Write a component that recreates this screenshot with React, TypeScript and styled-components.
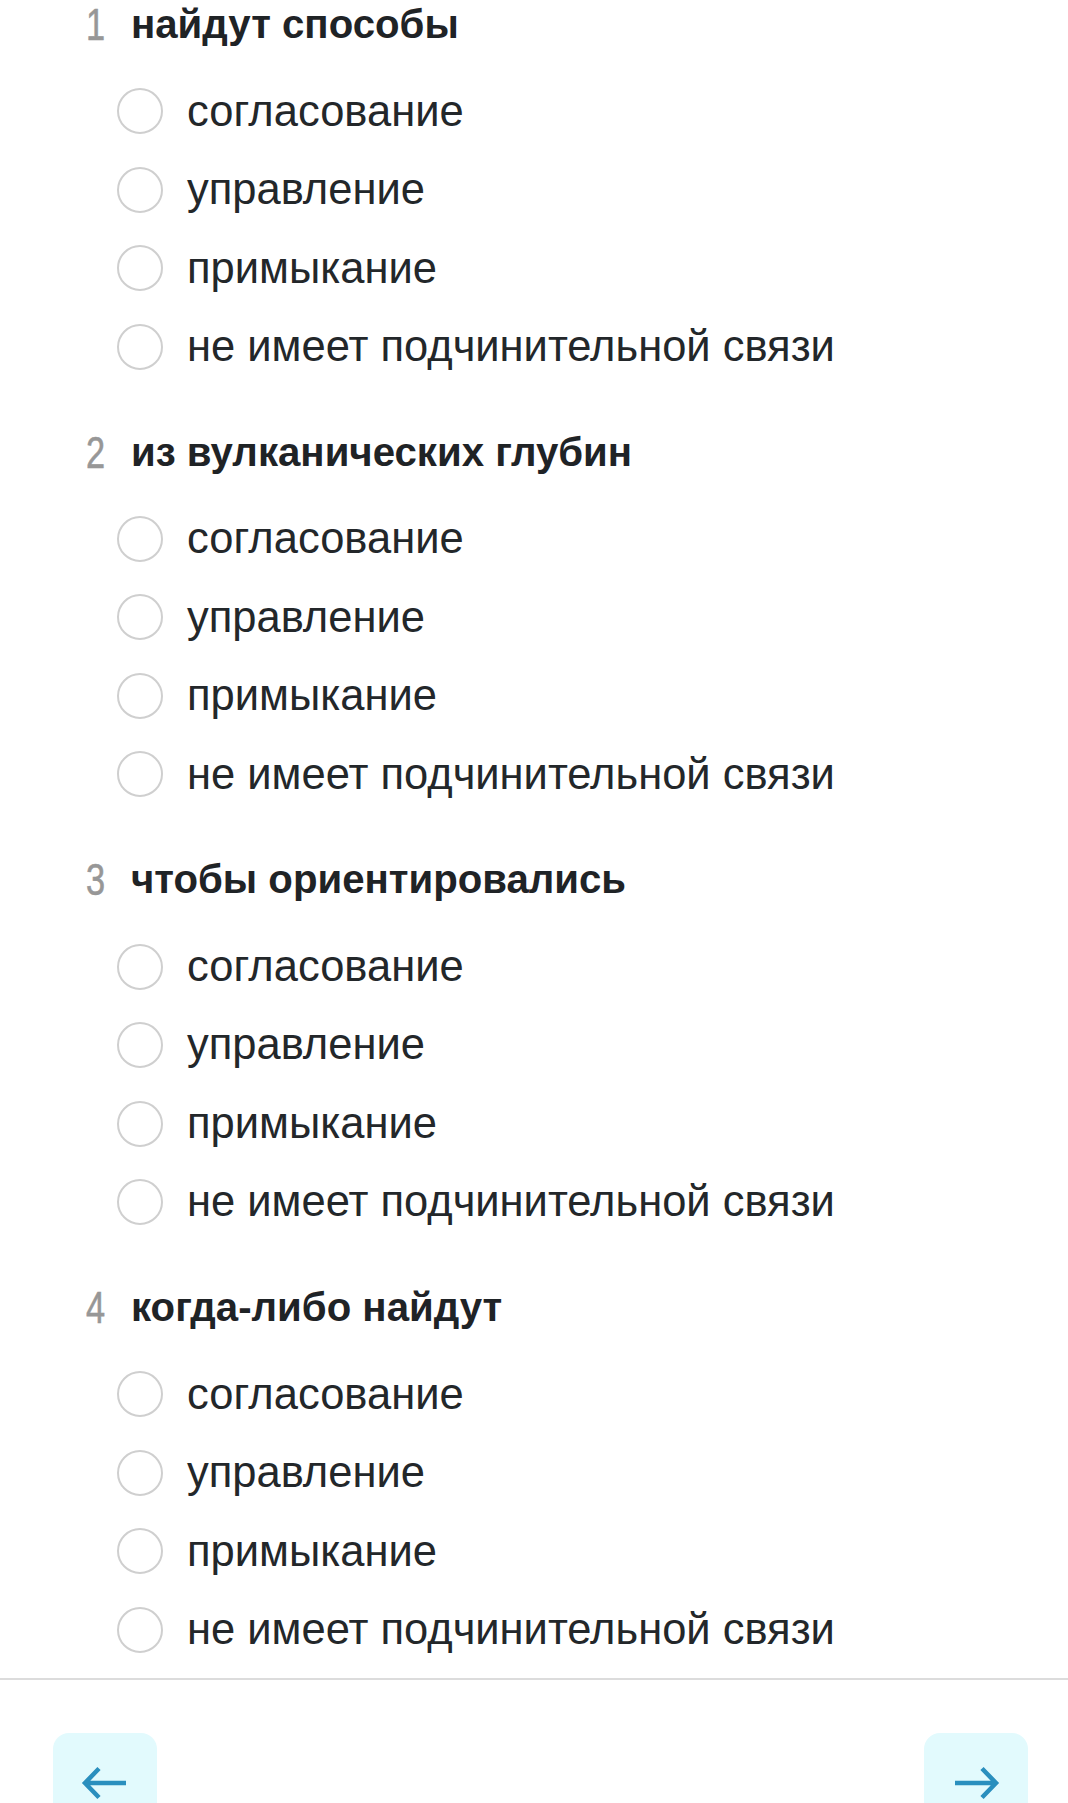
import React from "react";
import styled, { createGlobalStyle } from "styled-components";

const Global = createGlobalStyle`
  html, body { margin: 0; padding: 0; background: #ffffff; }
  body { font-family: "Liberation Sans", Arial, sans-serif; }
`;

const Page = styled.div`
  width: 1068px;
  height: 1803px;
  overflow: hidden;
  background: #fff;
  display: flex;
  flex-direction: column;
`;

const List = styled.div`
  display: flex;
  flex-direction: column;
  gap: 41.7px;
  padding-left: 86px;
`;

const Question = styled.section`
  display: flex;
  flex-direction: column;
  gap: 22px;
`;

const TitleRow = styled.div`
  display: flex;
  align-items: center;
  height: 50px;
`;

const NumBox = styled.span`
  width: 45px;
  flex-shrink: 0;
`;

const Num = styled.span`
  display: inline-block;
  font-family: "Liberation Sans", Arial, sans-serif;
  font-size: 44px;
  color: #979797;
  line-height: 1;
  -webkit-text-stroke: 0.6px #979797;
  transform: scaleX(0.78);
  transform-origin: left center;
`;

const Title = styled.span`
  font-weight: 700;
  font-size: 40.2px;
  color: #1f2326;
  line-height: 1;
`;

const Options = styled.div`
  display: flex;
  flex-direction: column;
  padding-left: 31px;
`;

const Option = styled.label`
  display: flex;
  align-items: center;
  gap: 24px;
  height: 78.5px;
`;

const Radio = styled.span`
  box-sizing: border-box;
  width: 46px;
  height: 46px;
  border-radius: 50%;
  border: 2.5px solid #cfcfcf;
  flex-shrink: 0;
`;

const OptText = styled.span`
  font-size: 43.5px;
  color: #23272a;
  line-height: 1;
`;

const Divider = styled.div`
  margin-top: 8.5px;
  height: 2px;
  width: 100%;
  background: #dcdcdc;
  flex-shrink: 0;
`;

const Footer = styled.div`
  display: flex;
  justify-content: space-between;
  padding: 53.5px 40px 0 53px;
`;

const NavButton = styled.button`
  width: 104px;
  height: 104px;
  border: none;
  border-radius: 16px;
  background: #e2fafd;
  display: flex;
  align-items: flex-start;
  justify-content: center;
  padding: 32px 0 0;
  box-sizing: border-box;
  flex-shrink: 0;
`;

const Arrow = ({ dir }: { dir: "left" | "right" }) => (
  <svg width="48" height="36" viewBox="0 0 48 36" style={{ transform: dir === "right" ? "scaleX(-1)" : undefined }}>
    <path d="M45 18 H4 M18 3.5 L4 18 L18 32.5" fill="none" stroke="#2a8fbe" strokeWidth="4.5" strokeLinecap="butt" strokeLinejoin="miter" />
  </svg>
);

const opts = ["согласование", "управление", "примыкание", "не имеет подчинительной связи"];
const questions = ["найдут способы", "из вулканических глубин", "чтобы ориентировались", "когда-либо найдут"];

export default function App() {
  return (
    <Page>
      <Global />
      <List>
        {questions.map((q, i) => (
          <Question key={q}>
            <TitleRow>
              <NumBox>
                <Num>{i + 1}</Num>
              </NumBox>
              <Title>{q}</Title>
            </TitleRow>
            <Options>
              {opts.map((o) => (
                <Option key={o}>
                  <Radio />
                  <OptText>{o}</OptText>
                </Option>
              ))}
            </Options>
          </Question>
        ))}
      </List>
      <Divider />
      <Footer>
        <NavButton aria-label="назад"><Arrow dir="left" /></NavButton>
        <NavButton aria-label="вперёд"><Arrow dir="right" /></NavButton>
      </Footer>
    </Page>
  );
}
